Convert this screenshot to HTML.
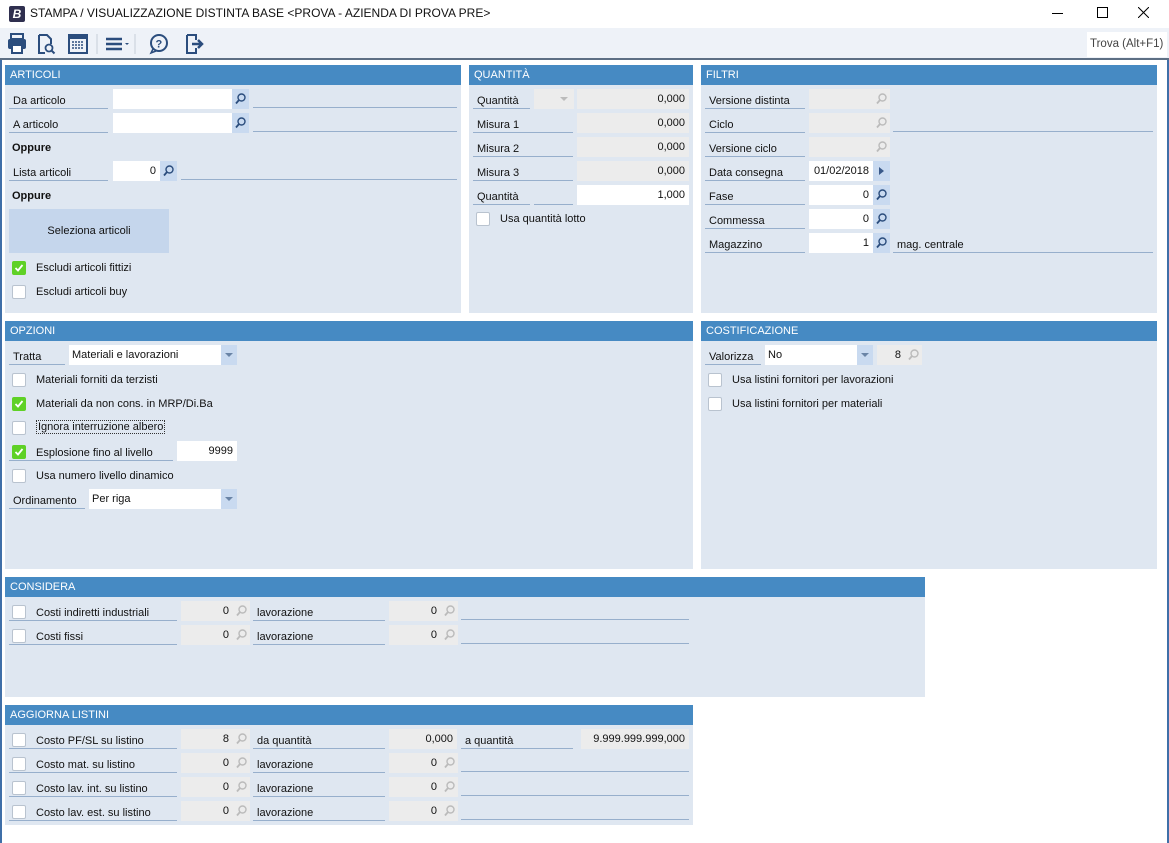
<!DOCTYPE html>
<html><head><meta charset="utf-8">
<style>
*{margin:0;padding:0;box-sizing:border-box}
body{width:1169px;height:843px;position:relative;background:#fff;font-family:"Liberation Sans",Tahoma,sans-serif;font-size:11px;color:#111;overflow:hidden}
div,span{position:absolute}
.pan{background:#dfe7f1}
.hd{left:0;right:0;top:0;height:20px;background:#468ac3;color:#fff;padding:4px 0 0 5px;font-size:11px}
.l{height:20px;border-bottom:1px solid #97afcc;padding:6px 0 0 4px;white-space:nowrap}
.t{white-space:nowrap}
.in{background:#fff;height:20px;text-align:right;padding:4px 4px 0 0;white-space:nowrap}
.ds{background:#ececec;height:20px;text-align:right;padding:4px 4px 0 0;white-space:nowrap}
.sb{background:#c9daf0;width:17px;height:20px}
.sd{background:#ececec;width:17px;height:20px}
.sb svg,.sd svg{position:absolute;left:3px;top:4px}
.ln{height:1px;background:#97afcc}
.cb{width:14px;height:14px;background:#fff;border:1px solid #b9c3cf;border-radius:2px}
.ck{width:14px;height:14px;background:#5fd126;border-radius:2px}
.ck svg{position:absolute;left:2px;top:2px}
.ar{background:#c9daf0;width:16px;height:20px}
.ar svg{position:absolute;left:4px;top:8px}
</style></head><body>
<svg width="0" height="0" style="position:absolute">
<defs>
<symbol id="mg" viewBox="0 0 11 12"><circle cx="6.5" cy="4.5" r="3.5" fill="none" stroke="currentColor" stroke-width="1.4"/><path d="M4 7L1 10.5" stroke="currentColor" stroke-width="1.8"/></symbol>
<symbol id="tk" viewBox="0 0 10 10"><path d="M1.5 5L4 7.5L8.5 2" fill="none" stroke="#fff" stroke-width="1.8"/></symbol>
<symbol id="dn" viewBox="0 0 8 4"><path d="M0 0H8L4 4z" fill="#6a84a6"/></symbol>
</defs></svg>
<div style="left:0;top:0;width:1169px;height:28px;background:#fff">
<div style="left:9px;top:6px;width:16px;height:16px;background:#2f2f4f;border-radius:2px;color:#fff;font-weight:bold;font-style:italic;font-size:12px;text-align:center;line-height:16px">B</div>
<span class="t" style="left:30px;top:6px;font-size:12px">STAMPA / VISUALIZZAZIONE DISTINTA BASE &lt;PROVA - AZIENDA DI PROVA PRE&gt;</span>
<div style="left:1052px;top:13px;width:11px;height:1px;background:#000"></div>
<div style="left:1097px;top:7px;width:11px;height:11px;border:1px solid #000"></div>
<svg style="position:absolute;left:1138px;top:7px" width="11" height="11"><path d="M0 0L11 11M11 0L0 11" stroke="#000"/></svg>
</div>
<div style="left:0;top:28px;width:1169px;height:32px;background:#eef2f8;border-bottom:2px solid #5d6f84">
<svg style="position:absolute;left:7px;top:5px" width="200" height="22" fill="#2b4d7d" stroke="#2b4d7d">
<rect x="4" y="1" width="12" height="5" fill="none" stroke-width="2"/><rect x="1" y="6" width="18" height="10" rx="2" stroke="none"/><rect x="5" y="12" width="10" height="8" fill="#fff" stroke-width="2"/>
<path d="M32 2h8l4 4v5M32 2v18h6" fill="none" stroke-width="2"/><circle cx="42" cy="15" r="3.5" fill="none" stroke-width="1.8"/><path d="M44.5 17.5l3 3" stroke-width="2"/>
<rect x="62" y="2" width="18" height="18" fill="none" stroke-width="2"/><rect x="62" y="2" width="18" height="4" stroke="none"/><path d="M65 9h12M65 12h12M65 15h12" stroke-width="1.5" stroke-dasharray="2 1"/>
<path d="M99 6h16M99 11h16M99 16h16" stroke-width="2.5"/><path d="M118 10h4l-2 2z" stroke="none"/>
<path d="M90 1v20M128 1v20" stroke="#c7ced8"/>
<circle cx="152" cy="10" r="8" fill="none" stroke-width="2"/><path d="M146 16l-2 4 5-2" fill="none" stroke-width="1.5"/><text x="148.5" y="14.5" font-size="11" font-weight="bold" stroke="none" font-family="Liberation Sans">?</text>
<path d="M180 2h9v5M180 2v18h9v-5" fill="none" stroke-width="2"/><path d="M185 11h9M191 7l4 4-4 4" fill="none" stroke-width="2.5"/>
</svg>
<div style="left:1087px;top:4px;width:80px;height:25px;background:#fff;padding:6px 0 0 3px;color:#444;font-size:11.5px" class="t">Trova (Alt+F1)</div>
</div>
<div style="left:0;top:60px;width:2px;height:783px;background:#3f6fa8"></div>
<div style="left:1167px;top:60px;width:2px;height:783px;background:#3f6fa8"></div>

<!-- ARTICOLI -->
<div class="pan" style="left:5px;top:65px;width:456px;height:248px">
<div class="hd">ARTICOLI</div>
<div class="l" style="left:4px;top:24px;width:99px">Da articolo</div>
<div class="in" style="left:108px;top:24px;width:119px"></div><div class="sb" style="left:227px;top:24px;color:#2b4d7d"><svg width="11" height="12"><use href="#mg"/></svg></div>
<div class="ln" style="left:248px;top:42px;width:204px"></div>
<div class="l" style="left:4px;top:48px;width:99px">A articolo</div>
<div class="in" style="left:108px;top:48px;width:119px"></div><div class="sb" style="left:227px;top:48px;color:#2b4d7d"><svg width="11" height="12"><use href="#mg"/></svg></div>
<div class="ln" style="left:248px;top:66px;width:204px"></div>
<span class="t" style="left:7px;top:77px;font-weight:bold">Oppure</span>
<div class="l" style="left:4px;top:96px;width:99px">Lista articoli</div>
<div class="in" style="left:108px;top:96px;width:47px">0</div><div class="sb" style="left:155px;top:96px;color:#2b4d7d"><svg width="11" height="12"><use href="#mg"/></svg></div>
<div class="ln" style="left:176px;top:114px;width:276px"></div>
<span class="t" style="left:7px;top:125px;font-weight:bold">Oppure</span>
<div style="left:4px;top:144px;width:160px;height:44px;background:#c5d6ec;text-align:center;padding-top:16px">Seleziona articoli</div>
<div class="ck" style="left:7px;top:196px"><svg width="10" height="10"><use href="#tk"/></svg></div><span class="t" style="left:31px;top:197px">Escludi articoli fittizi</span>
<div class="cb" style="left:7px;top:220px"></div><span class="t" style="left:31px;top:221px">Escludi articoli buy</span>
</div>

<!-- QUANTITA -->
<div class="pan" style="left:469px;top:65px;width:224px;height:248px">
<div class="hd">QUANTITÀ</div>
<div class="l" style="left:4px;top:24px;width:57px">Quantità</div>
<div class="ds" style="left:65px;top:24px;width:40px"><svg style="position:absolute;left:26px;top:8px" width="8" height="4"><path d="M0 0H8L4 4z" fill="#bbb"/></svg></div>
<div class="ds" style="left:108px;top:24px;width:112px">0,000</div>
<div class="l" style="left:4px;top:48px;width:100px">Misura 1</div><div class="ds" style="left:108px;top:48px;width:112px">0,000</div>
<div class="l" style="left:4px;top:72px;width:100px">Misura 2</div><div class="ds" style="left:108px;top:72px;width:112px">0,000</div>
<div class="l" style="left:4px;top:96px;width:100px">Misura 3</div><div class="ds" style="left:108px;top:96px;width:112px">0,000</div>
<div class="l" style="left:4px;top:120px;width:57px">Quantità</div><div class="ln" style="left:65px;top:139px;width:39px"></div>
<div class="in" style="left:108px;top:120px;width:112px">1,000</div>
<div class="cb" style="left:7px;top:147px"></div><span class="t" style="left:31px;top:148px">Usa quantità lotto</span>
</div>

<!-- FILTRI -->
<div class="pan" style="left:701px;top:65px;width:456px;height:248px">
<div class="hd">FILTRI</div>
<div class="l" style="left:4px;top:24px;width:100px">Versione distinta</div><div class="ds" style="left:108px;top:24px;width:64px"></div><div class="sd" style="left:172px;top:24px;color:#bbb"><svg width="11" height="12"><use href="#mg"/></svg></div>
<div class="l" style="left:4px;top:48px;width:100px">Ciclo</div><div class="ds" style="left:108px;top:48px;width:64px"></div><div class="sd" style="left:172px;top:48px;color:#bbb"><svg width="11" height="12"><use href="#mg"/></svg></div><div class="ln" style="left:192px;top:66px;width:260px"></div>
<div class="l" style="left:4px;top:72px;width:100px">Versione ciclo</div><div class="ds" style="left:108px;top:72px;width:64px"></div><div class="sd" style="left:172px;top:72px;color:#bbb"><svg width="11" height="12"><use href="#mg"/></svg></div>
<div class="l" style="left:4px;top:96px;width:100px">Data consegna</div><div class="in" style="left:108px;top:96px;width:64px">01/02/2018</div><div class="sb" style="left:172px;top:96px"><svg style="position:absolute;left:6px;top:6px" width="5" height="8"><path d="M0 0L5 4L0 8z" fill="#3a5a8a"/></svg></div>
<div class="l" style="left:4px;top:120px;width:100px">Fase</div><div class="in" style="left:108px;top:120px;width:64px">0</div><div class="sb" style="left:172px;top:120px;color:#2b4d7d"><svg width="11" height="12"><use href="#mg"/></svg></div>
<div class="l" style="left:4px;top:144px;width:100px">Commessa</div><div class="in" style="left:108px;top:144px;width:64px">0</div><div class="sb" style="left:172px;top:144px;color:#2b4d7d"><svg width="11" height="12"><use href="#mg"/></svg></div>
<div class="l" style="left:4px;top:168px;width:100px">Magazzino</div><div class="in" style="left:108px;top:168px;width:64px">1</div><div class="sb" style="left:172px;top:168px;color:#2b4d7d"><svg width="11" height="12"><use href="#mg"/></svg></div>
<div class="l" style="left:192px;top:168px;width:260px">mag. centrale</div>
</div>

<!-- OPZIONI -->
<div class="pan" style="left:5px;top:321px;width:688px;height:248px">
<div class="hd">OPZIONI</div>
<div class="l" style="left:4px;top:24px;width:56px">Tratta</div>
<div class="in" style="left:64px;top:24px;width:152px;text-align:left;padding-left:3px">Materiali e lavorazioni</div><div class="ar" style="left:216px;top:24px"><svg width="8" height="4"><use href="#dn"/></svg></div>
<div class="cb" style="left:7px;top:52px"></div><span class="t" style="left:31px;top:53px">Materiali forniti da terzisti</span>
<div class="ck" style="left:7px;top:76px"><svg width="10" height="10"><use href="#tk"/></svg></div><span class="t" style="left:31px;top:77px">Materiali da non cons. in MRP/Di.Ba</span>
<div class="cb" style="left:7px;top:100px"></div><span class="t" style="left:31px;top:99px;border:1px dotted #333;padding:0 1px">Ignora interruzione albero</span>
<div class="ck" style="left:7px;top:124px"><svg width="10" height="10"><use href="#tk"/></svg></div><div class="l" style="left:4px;top:120px;width:164px;padding-left:27px">Esplosione fino al livello</div>
<div class="in" style="left:172px;top:120px;width:60px">9999</div>
<div class="cb" style="left:7px;top:148px"></div><span class="t" style="left:31px;top:149px">Usa numero livello dinamico</span>
<div class="l" style="left:4px;top:168px;width:76px">Ordinamento</div>
<div class="in" style="left:84px;top:168px;width:132px;text-align:left;padding-left:3px">Per riga</div><div class="ar" style="left:216px;top:168px"><svg width="8" height="4"><use href="#dn"/></svg></div>
</div>

<!-- COSTIFICAZIONE -->
<div class="pan" style="left:701px;top:321px;width:456px;height:248px">
<div class="hd">COSTIFICAZIONE</div>
<div class="l" style="left:4px;top:24px;width:56px">Valorizza</div>
<div class="in" style="left:64px;top:24px;width:92px;text-align:left;padding-left:3px">No</div><div class="ar" style="left:156px;top:24px"><svg width="8" height="4"><use href="#dn"/></svg></div>
<div class="ds" style="left:176px;top:24px;width:28px">8</div><div class="sd" style="left:204px;top:24px;color:#bbb"><svg width="11" height="12"><use href="#mg"/></svg></div>
<div class="cb" style="left:7px;top:52px"></div><span class="t" style="left:31px;top:53px">Usa listini fornitori per lavorazioni</span>
<div class="cb" style="left:7px;top:76px"></div><span class="t" style="left:31px;top:77px">Usa listini fornitori per materiali</span>
</div>

<!-- CONSIDERA -->
<div class="pan" style="left:5px;top:577px;width:920px;height:120px">
<div class="hd">CONSIDERA</div>
<div class="cb" style="left:7px;top:28px"></div><div class="l" style="left:4px;top:24px;width:168px;padding-left:27px">Costi indiretti industriali</div>
<div class="ds" style="left:176px;top:24px;width:52px">0</div><div class="sd" style="left:228px;top:24px;color:#bbb"><svg width="11" height="12"><use href="#mg"/></svg></div>
<div class="l" style="left:248px;top:24px;width:132px">lavorazione</div>
<div class="ds" style="left:384px;top:24px;width:52px">0</div><div class="sd" style="left:436px;top:24px;color:#bbb"><svg width="11" height="12"><use href="#mg"/></svg></div>
<div class="ln" style="left:456px;top:42px;width:228px"></div>
<div class="cb" style="left:7px;top:52px"></div><div class="l" style="left:4px;top:48px;width:168px;padding-left:27px">Costi fissi</div>
<div class="ds" style="left:176px;top:48px;width:52px">0</div><div class="sd" style="left:228px;top:48px;color:#bbb"><svg width="11" height="12"><use href="#mg"/></svg></div>
<div class="l" style="left:248px;top:48px;width:132px">lavorazione</div>
<div class="ds" style="left:384px;top:48px;width:52px">0</div><div class="sd" style="left:436px;top:48px;color:#bbb"><svg width="11" height="12"><use href="#mg"/></svg></div>
<div class="ln" style="left:456px;top:66px;width:228px"></div>
</div>

<!-- AGGIORNA LISTINI -->
<div class="pan" style="left:5px;top:705px;width:688px;height:120px">
<div class="hd">AGGIORNA LISTINI</div>
<div class="cb" style="left:7px;top:28px"></div><div class="l" style="left:4px;top:24px;width:168px;padding-left:27px">Costo PF/SL su listino</div>
<div class="ds" style="left:176px;top:24px;width:52px">8</div><div class="sd" style="left:228px;top:24px;color:#bbb"><svg width="11" height="12"><use href="#mg"/></svg></div>
<div class="l" style="left:248px;top:24px;width:132px">da quantità</div>
<div class="ds" style="left:384px;top:24px;width:68px">0,000</div>
<div class="l" style="left:456px;top:24px;width:112px">a quantità</div>
<div class="ds" style="left:576px;top:24px;width:108px">9.999.999.999,000</div>
<div class="cb" style="left:7px;top:52px"></div><div class="l" style="left:4px;top:48px;width:168px;padding-left:27px">Costo mat. su listino</div>
<div class="ds" style="left:176px;top:48px;width:52px">0</div><div class="sd" style="left:228px;top:48px;color:#bbb"><svg width="11" height="12"><use href="#mg"/></svg></div>
<div class="l" style="left:248px;top:48px;width:132px">lavorazione</div>
<div class="ds" style="left:384px;top:48px;width:52px">0</div><div class="sd" style="left:436px;top:48px;color:#bbb"><svg width="11" height="12"><use href="#mg"/></svg></div>
<div class="ln" style="left:456px;top:66px;width:228px"></div>
<div class="cb" style="left:7px;top:76px"></div><div class="l" style="left:4px;top:72px;width:168px;padding-left:27px">Costo lav. int. su listino</div>
<div class="ds" style="left:176px;top:72px;width:52px">0</div><div class="sd" style="left:228px;top:72px;color:#bbb"><svg width="11" height="12"><use href="#mg"/></svg></div>
<div class="l" style="left:248px;top:72px;width:132px">lavorazione</div>
<div class="ds" style="left:384px;top:72px;width:52px">0</div><div class="sd" style="left:436px;top:72px;color:#bbb"><svg width="11" height="12"><use href="#mg"/></svg></div>
<div class="ln" style="left:456px;top:90px;width:228px"></div>
<div class="cb" style="left:7px;top:100px"></div><div class="l" style="left:4px;top:96px;width:168px;padding-left:27px">Costo lav. est. su listino</div>
<div class="ds" style="left:176px;top:96px;width:52px">0</div><div class="sd" style="left:228px;top:96px;color:#bbb"><svg width="11" height="12"><use href="#mg"/></svg></div>
<div class="l" style="left:248px;top:96px;width:132px">lavorazione</div>
<div class="ds" style="left:384px;top:96px;width:52px">0</div><div class="sd" style="left:436px;top:96px;color:#bbb"><svg width="11" height="12"><use href="#mg"/></svg></div>
<div class="ln" style="left:456px;top:114px;width:228px"></div>
</div>
</body></html>
